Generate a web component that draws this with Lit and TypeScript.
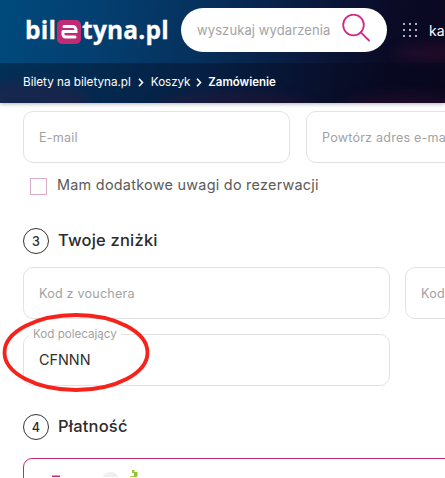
import { LitElement, html, css } from "lit";
import { customElement } from "lit/decorators.js";

@customElement("app-root")
export class AppRoot extends LitElement {
  static styles = css`
    :host { display: block; width: 445px; height: 478px; overflow: hidden; background: #fff; position: relative;
      font-family: "Inter", "Open Sans", sans-serif; color: #2b2b2b; }
    * { box-sizing: border-box; }
    .header { height: 103px; position: relative; overflow: hidden; color: #fff;
      background: linear-gradient(100deg, #004a7c 0%, #033f70 22%, #06305c 45%, #0a1a3e 68%, #0a0b26 85%, #0b0720 100%);
      box-shadow: 0 1px 4px rgba(0,0,0,.3); }
    .glow { position: absolute; border-radius: 50%; filter: blur(6px); }
    .glow.a { left: -30px; top: 80px; width: 120px; height: 50px; background: rgba(120,30,80,.28); }
    .glow.b { left: 150px; top: 92px; width: 170px; height: 40px; background: rgba(110,20,70,.3); }
    .glow.c { left: 393px; top: 44px; width: 90px; height: 18px; background: rgba(120,25,70,.2); }
    .glow.d { left: 340px; top: 94px; width: 130px; height: 30px; background: rgba(120,25,70,.3); }
    .top { height: 63px; display: flex; align-items: center; padding: 0 0 3px 25px; position: relative; }
    .logo { display: flex; align-items: center; width: 156px; flex: none; margin-top: 1px;
      font: 700 24.5px/1 "Open Sans", sans-serif; letter-spacing: .2px; -webkit-text-stroke: .3px #fff; }
    .logo-mark { width: 24px; height: 24px; border-radius: 5px; background: #c02c74; margin: 2px 1px 0 1px;
      display: flex; align-items: center; justify-content: center; flex: none; }
    .search { width: 206px; height: 44px; border-radius: 22px; background: #fff; flex: none;
      display: flex; align-items: center; justify-content: space-between; padding: 0 17px 0 16px; }
    .search span { font-size: 13px; color: #a3a3a3; letter-spacing: .1px; white-space: nowrap; }
    .search svg { margin-bottom: 4px; }
    .apps { margin: 0 0 1px 16px; flex: none; display: block; }
    .ka { margin-left: 12px; margin-top: 1px; font-size: 14px; white-space: nowrap; }
    .crumbs { height: 40px; background: rgba(5,8,30,.38); display: flex; align-items: center; padding: 0 0 2px 23px;
      font-size: 11.7px; position: relative; gap: 7px; white-space: nowrap; }
    .crumbs .k { margin-right: -1px; letter-spacing: -.1px; }
    .crumbs b { font-weight: 600; font-size: 11.5px; margin-left: -1px; }
    .form { padding: 8px 0 0 23px; }
    .row { display: flex; gap: 16px; width: 640px; }
    .field { height: 52px; border: 1px solid #e2e2e2; border-radius: 10px; display: flex; align-items: center;
      padding: 0 15px; font-size: 12.6px; letter-spacing: .2px; color: #a2a2a2; position: relative; flex: none; white-space: nowrap; }
    .w267 { width: 267px; }
    .w367 { width: 367px; }
    .check { display: flex; align-items: center; gap: 10px; margin: 13px 0 0 7px; height: 18px; font-size: 14.4px; letter-spacing: .27px; color: #5a5a5a; white-space: nowrap; }
    .box { width: 17px; height: 17px; border: 1px solid #dcaec6; margin-top: 3px; flex: none; }
    .check span:last-child { margin-top: -2px; }
    .step { display: flex; align-items: center; gap: 9px; height: 26px; font-size: 16.5px; font-weight: 500; letter-spacing: .2px; color: #2b2b2b; }
    .step span:last-child { margin-top: -2px; }
    .num { width: 26px; height: 26px; border: 1px solid #333; border-radius: 50%; display: flex; align-items: center;
      justify-content: center; font-size: 12.5px; flex: none; }
    .s3 { margin-top: 34px; }
    .s3-row { margin-top: 13px; gap: 15px; }
    .refer { margin-top: 15px; color: #2e2e2e; font-size: 14.4px; letter-spacing: 0; padding-bottom: 2px; }
    .legend { position: absolute; left: 5px; top: -8px; padding: 0 4px; background: #fff; font-size: 11.6px; color: #a2a2a2; line-height: 14px; }
    .s4 { margin-top: 28px; }
    .pay { margin-top: 18px; width: 460px; height: 60px; border: 1px solid #c42a74; border-radius: 9px; position: relative; }
    .pay svg { position: absolute; left: 21px; top: 0; }
    .ellipse { position: absolute; left: 2px; top: 312px; pointer-events: none; }
  `;

  render() {
    return html`
      <div class="header">
        <div class="glow a"></div><div class="glow b"></div><div class="glow c"></div><div class="glow d"></div>
        <div class="top">
          <div class="logo">bil<span class="logo-mark"><svg width="18" height="16" viewBox="0 0 18 16" fill="none" stroke="#fff" stroke-width="3" stroke-linecap="round"><path d="M4 2.500H13C15 2.500 16 4 16 7.500H3M3 8C2.500 12 4 13 6 13H15"/></svg></span>tyna.pl</div>
          <div class="search">
            <span>wyszukaj wydarzenia</span>
            <svg width="28" height="28" viewBox="0 0 28 28" fill="none" stroke="#d12a84" stroke-width="1.8" stroke-linecap="round"><circle cx="11.500" cy="11" r="10.300"/><path d="M18.800 18.300L27 26.500"/></svg>
          </div>
          <svg class="apps" width="14" height="14" viewBox="0 0 14 14" fill="#fff"><circle cx="1" cy="1" r=".9"/><circle cx="7" cy="1" r=".9"/><circle cx="13" cy="1" r=".9"/><circle cx="1" cy="7" r=".9"/><circle cx="7" cy="7" r=".9"/><circle cx="13" cy="7" r=".9"/><circle cx="1" cy="13" r=".9"/><circle cx="7" cy="13" r=".9"/><circle cx="13" cy="13" r=".9"/></svg>
          <span class="ka">ka</span>
        </div>
        <div class="crumbs">
          <span>Bilety na biletyna.pl</span>
          <svg width="6" height="9" viewBox="0 0 6 9" fill="none" stroke="#fff" stroke-width="1.600"><path d="M1 .8L4.500 4.500L1 8.200"/></svg>
          <span class="k">Koszyk</span>
          <svg width="6" height="9" viewBox="0 0 6 9" fill="none" stroke="#fff" stroke-width="1.600"><path d="M1 .8L4.500 4.500L1 8.200"/></svg>
          <b>Zamówienie</b>
        </div>
      </div>
      <div class="form">
        <div class="row">
          <div class="field w267">E-mail</div>
          <div class="field w267">Powtórz adres e-mail</div>
        </div>
        <div class="check"><span class="box"></span><span>Mam dodatkowe uwagi do rezerwacji</span></div>
        <div class="step s3"><span class="num">3</span><span>Twoje zniżki</span></div>
        <div class="row s3-row">
          <div class="field w367">Kod z vouchera</div>
          <div class="field w267">Kod</div>
        </div>
        <div class="field w367 refer"><span class="legend">Kod polecający</span>CFNNN</div>
        <div class="step s4"><span class="num">4</span><span>Płatność</span></div>
        <div class="pay">
          <svg width="120" height="18" viewBox="0 0 120 18"><path d="M7 17.500H15" stroke="#c42a74" stroke-width="2" fill="none"/><ellipse cx="65.500" cy="20" rx="8" ry="7" fill="#f1efec"/><rect x="87" y="11" width="2.500" height="3" fill="#9ac83c"/><rect x="89" y="13" width="3.500" height="4" fill="#8fc32f"/><path d="M85 18Q90 18 92 17" stroke="#9ac83c" stroke-width="1.500" fill="none"/></svg>
        </div>
      </div>
      <svg class="ellipse" width="150" height="82" viewBox="0 0 150 82" fill="none"><ellipse cx="74" cy="40.500" rx="71.500" ry="37.500" stroke="#f5231b" stroke-width="3.800"/></svg>
    `;
  }
}
